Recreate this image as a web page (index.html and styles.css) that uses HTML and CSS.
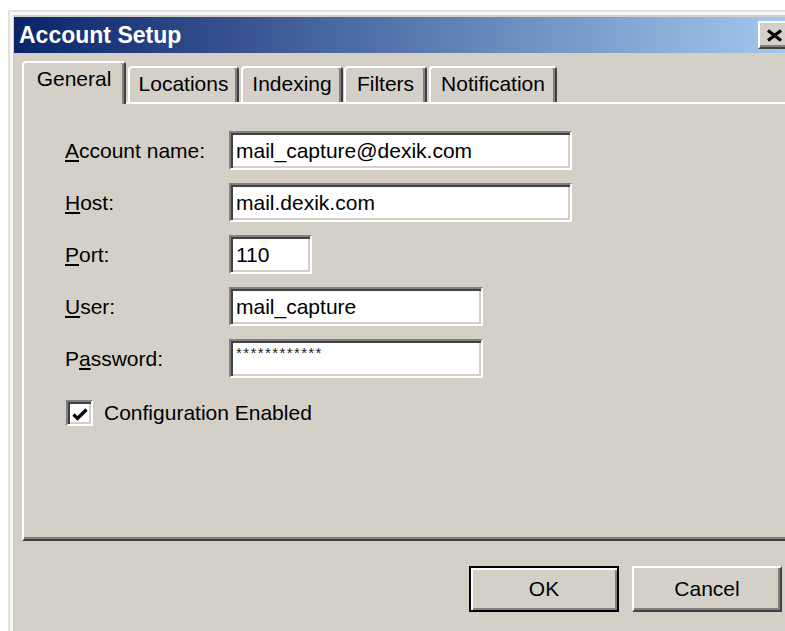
FILE: index.html
```html
<!DOCTYPE html>
<html lang="en">
<head>
<meta charset="utf-8">
<title>Account Setup</title>
<link rel="stylesheet" href="styles.css">
</head>
<body>
<div class="window">
  <div class="titlebar">
    <span class="title">Account Setup</span>
    <button class="close" type="button" aria-label="Close">
      <svg width="17" height="13" viewBox="0 0 17 13" aria-hidden="true">
        <path d="M2 1.5 L15 11.5 M15 1.5 L2 11.5" stroke="#000" stroke-width="3.2" fill="none"/>
      </svg>
    </button>
  </div>

  <div class="tabs">
    <div class="tab active">General</div>
    <div class="tab">Locations</div>
    <div class="tab">Indexing</div>
    <div class="tab">Filters</div>
    <div class="tab">Notification</div>
  </div>

  <div class="panel">
    <div class="fields">
      <span class="label"><u>A</u>ccount name:</span>
      <span class="field wide">mail_capture@dexik.com</span>

      <span class="label"><u>H</u>ost:</span>
      <span class="field wide">mail.dexik.com</span>

      <span class="label"><u>P</u>ort:</span>
      <span class="field short">110</span>

      <span class="label"><u>U</u>ser:</span>
      <span class="field mid">mail_capture</span>

      <span class="label">P<u>a</u>ssword:</span>
      <span class="field mid secret">************</span>
    </div>

    <div class="check">
      <span class="box">
        <svg width="16" height="14" viewBox="0 0 16 14" aria-hidden="true">
          <path d="M1.5 6.5 L5.5 10.5 L14.5 1.5" stroke="#000" stroke-width="3.2" fill="none"/>
        </svg>
      </span>
      <span>Configuration Enabled</span>
    </div>
  </div>

  <div class="actions">
    <button class="btn default" type="button">OK</button>
    <button class="btn" type="button">Cancel</button>
  </div>
</div>
</body>
</html>
```

FILE: styles.css
```css
html,
body {
  margin: 0;
  height: 100%;
  overflow: hidden;
  background: #fff;
}

body {
  font-family: "Liberation Sans", Arial, sans-serif;
  font-size: 21px;
  color: #000;
}

/* dialog frame; it runs past the right edge of the view */
.window {
  margin: 10px 0 0 8px;
  width: 820px;
  height: 640px;
  padding: 5px 6px 0 4px;
  background: #d4d0c8;
  border-top: 2px solid #e4e1db;
  border-left: 2px solid #e4e1db;
  box-shadow: inset 3px 3px 0 #f7f6f3;
}

/* caption */
.titlebar {
  height: 36px;
  display: flex;
  align-items: center;
  justify-content: space-between;
  padding: 0 44px 0 5px;
  background: linear-gradient(to right, #0a246a 0, #a6caf0 785px);
  color: #fff;
}

.title {
  font-weight: bold;
  font-size: 23px;
  line-height: 1;
}

.close {
  flex: none;
  width: 32px;
  height: 28px;
  box-sizing: border-box;
  padding: 0;
  display: flex;
  align-items: center;
  justify-content: center;
  background: #d4d0c8;
  border: 2px solid;
  border-color: #fff #404040 #404040 #fff;
  box-shadow: inset -2px -2px 0 #808080;
}

/* tab strip */
.tabs {
  display: flex;
  align-items: flex-end;
  height: 41px;
  margin-top: 8px;
  padding-left: 8px;
}

.tab {
  box-sizing: border-box;
  height: 36px;
  padding-top: 4px;
  line-height: 24px;
  text-align: center;
  background: #d4d0c8;
  border-top: 2px solid #fff;
  border-left: 2px solid #fff;
  border-right: 2px solid #404040;
  border-radius: 4px 4px 0 0;
  box-shadow: inset -2px 0 0 #808080;
  margin-right: 2px;
}

.tab:nth-child(1) { width: 104px; }
.tab:nth-child(2) { width: 111px; }
.tab:nth-child(3) { width: 102px; margin-right: 1px; }
.tab:nth-child(4) { width: 83px; }
.tab:nth-child(5) { width: 128px; }

.tab.active {
  position: relative;
  z-index: 1;
  height: 43px;
  margin-bottom: -2px;
}

/* page body */
.panel {
  box-sizing: border-box;
  height: 439px;
  margin-left: 8px;
  padding: 27px 0 0 41px;
  border-top: 2px solid #fff;
  border-left: 2px solid #fff;
  border-bottom: 2px solid #404040;
  box-shadow: inset 0 -2px 0 #808080;
}

.fields {
  display: grid;
  grid-template-columns: 164px auto;
  row-gap: 13px;
  align-items: center;
  justify-items: start;
}

.label {
  line-height: 24px;
}

.field {
  box-sizing: border-box;
  height: 39px;
  padding: 0 5px;
  line-height: 35px;
  background: #fff;
  border: 2px solid;
  border-color: #808080 #fff #fff #808080;
  box-shadow: inset 2px 2px 0 #404040, inset -2px -2px 0 #d4d0c8;
  white-space: nowrap;
}

.field.wide { width: 343px; }
.field.short { width: 83px; }
.field.mid { width: 254px; }

/* masked password: small asterisks riding high in the box */
.field.secret {
  font-size: 15px;
  letter-spacing: 1.4px;
  line-height: 24px;
  color: #222;
}

.check {
  display: flex;
  align-items: center;
  margin-top: 22px;
  margin-left: 1px;
}

.box {
  box-sizing: border-box;
  width: 27px;
  height: 26px;
  margin-right: 11px;
  padding: 3px 0 0 1px;
  display: flex;
  align-items: center;
  justify-content: center;
  background: #fff;
  border: 2px solid;
  border-color: #808080 #fff #fff #808080;
  box-shadow: inset 2px 2px 0 #404040, inset -2px -2px 0 #d4d0c8;
}

/* dialog buttons */
.actions {
  display: flex;
  justify-content: flex-end;
  gap: 13px;
  margin-top: 25px;
  padding-right: 52px;
}

.btn {
  box-sizing: border-box;
  width: 150px;
  height: 46px;
  padding: 0;
  font: inherit;
  color: #000;
  background: #d4d0c8;
  border: 2px solid;
  border-color: #fff #404040 #404040 #fff;
  box-shadow: inset -2px -2px 0 #808080;
}

.btn.default {
  border-color: #000;
  box-shadow: inset 2px 2px 0 #fff, inset -2px -2px 0 #808080;
}
```
